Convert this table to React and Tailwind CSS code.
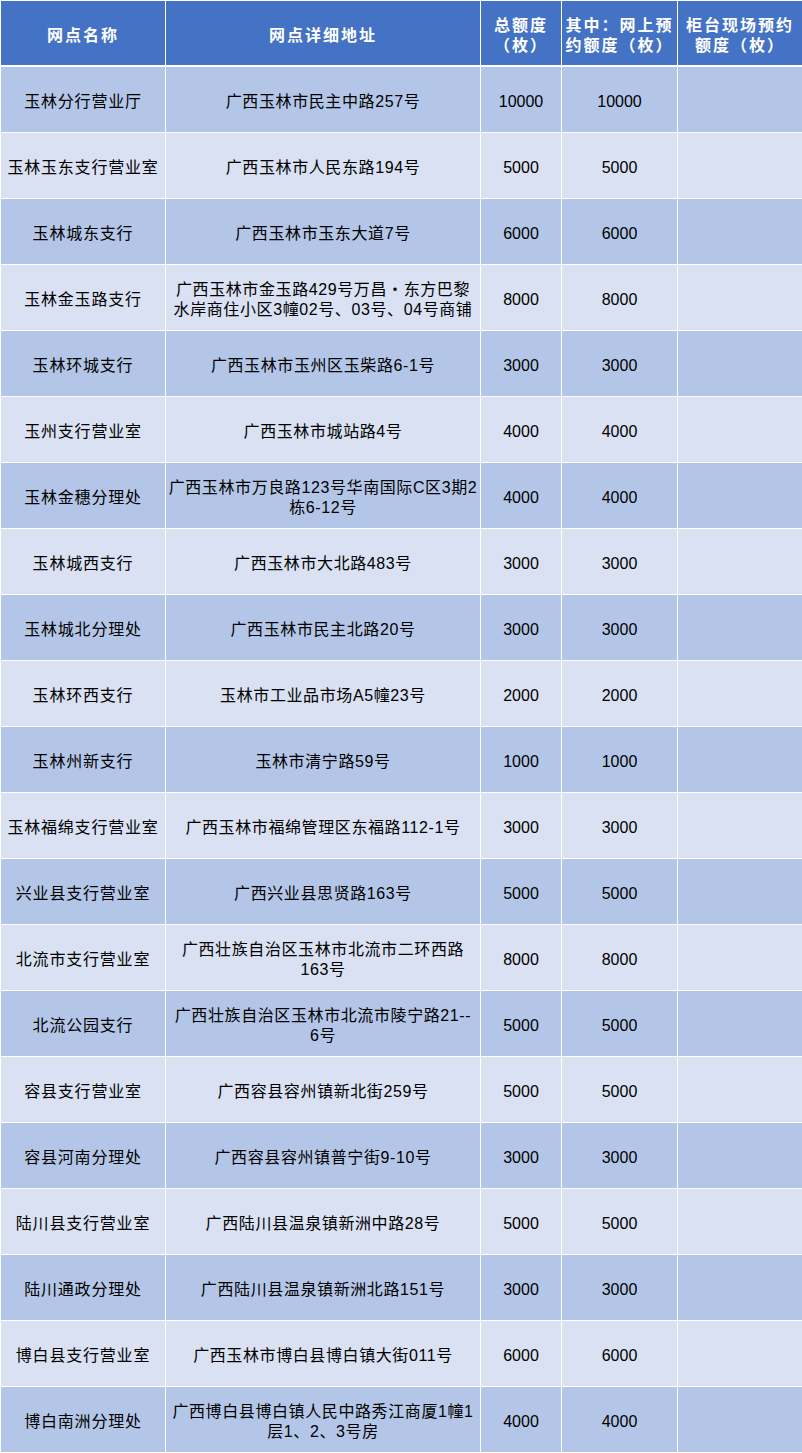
const rows = [
  ["玉林分行营业厅", ["广西玉林市民主中路257号"], "10000", "10000"],
  ["玉林玉东支行营业室", ["广西玉林市人民东路194号"], "5000", "5000"],
  ["玉林城东支行", ["广西玉林市玉东大道7号"], "6000", "6000"],
  ["玉林金玉路支行", ["广西玉林市金玉路429号万昌・东方巴黎", "水岸商住小区3幢02号、03号、04号商铺"], "8000", "8000"],
  ["玉林环城支行", ["广西玉林市玉州区玉柴路6-1号"], "3000", "3000"],
  ["玉州支行营业室", ["广西玉林市城站路4号"], "4000", "4000"],
  ["玉林金穗分理处", ["广西玉林市万良路123号华南国际C区3期2", "栋6-12号"], "4000", "4000"],
  ["玉林城西支行", ["广西玉林市大北路483号"], "3000", "3000"],
  ["玉林城北分理处", ["广西玉林市民主北路20号"], "3000", "3000"],
  ["玉林环西支行", ["玉林市工业品市场A5幢23号"], "2000", "2000"],
  ["玉林州新支行", ["玉林市清宁路59号"], "1000", "1000"],
  ["玉林福绵支行营业室", ["广西玉林市福绵管理区东福路112-1号"], "3000", "3000"],
  ["兴业县支行营业室", ["广西兴业县思贤路163号"], "5000", "5000"],
  ["北流市支行营业室", ["广西壮族自治区玉林市北流市二环西路", "163号"], "8000", "8000"],
  ["北流公园支行", ["广西壮族自治区玉林市北流市陵宁路21--", "6号"], "5000", "5000"],
  ["容县支行营业室", ["广西容县容州镇新北街259号"], "5000", "5000"],
  ["容县河南分理处", ["广西容县容州镇普宁街9-10号"], "3000", "3000"],
  ["陆川县支行营业室", ["广西陆川县温泉镇新洲中路28号"], "5000", "5000"],
  ["陆川通政分理处", ["广西陆川县温泉镇新洲北路151号"], "3000", "3000"],
  ["博白县支行营业室", ["广西玉林市博白县博白镇大街011号"], "6000", "6000"],
  ["博白南洲分理处", ["广西博白县博白镇人民中路秀江商厦1幢1", "层1、2、3号房"], "4000", "4000"],
];

const font = { fontFamily: '"Liberation Sans", "Noto Sans CJK SC", sans-serif' };

function Lines({ lines }) {
  return (
    <>
      {lines.map((l, i) => (
        <div key={i} className="whitespace-nowrap">{l}</div>
      ))}
    </>
  );
}

export default function App() {
  const cols = "grid grid-cols-[164px_314px_80px_115px_124px] gap-x-px";
  const cell = "flex flex-col items-center justify-center text-center";
  return (
    <div className="w-[802px] bg-white pt-px pl-px" style={font}>
      <div className={`${cols} h-[64px] mb-[2px]`}>
        {[["网点名称"], ["网点详细地址"], ["总额度", "（枚）"], ["其中：网上预", "约额度（枚）"], ["柜台现场预约", "额度（枚）"]].map((h, i) => (
          <div key={i} className={`${cell} bg-[#4472c4] text-white font-bold text-[16px] leading-[20px] tracking-[2px] pt-[6px]`}>
            <Lines lines={h} />
          </div>
        ))}
      </div>
      <div className={`${cols} gap-y-px auto-rows-[65px] pb-px`}>
        {rows.map((r, i) => {
          const bg = i % 2 === 0 ? "bg-[#b4c6e7]" : "bg-[#d9e1f2]";
          return [
            <div key={i + "a"} className={`${cell} ${bg} text-black text-[16px] leading-[20px] tracking-[0.8px] pt-[4px]`}>{r[0]}</div>,
            <div key={i + "b"} className={`${cell} ${bg} text-black text-[16px] leading-[20px] tracking-[0.6px] pt-[4px]`}><Lines lines={r[1]} /></div>,
            <div key={i + "c"} className={`${cell} ${bg} text-black text-[16px] leading-[20px] pt-[4px]`}>{r[2]}</div>,
            <div key={i + "d"} className={`${cell} ${bg} text-black text-[16px] leading-[20px] pt-[4px]`}>{r[3]}</div>,
            <div key={i + "e"} className={`${bg}`}></div>,
          ];
        })}
      </div>
    </div>
  );
}
